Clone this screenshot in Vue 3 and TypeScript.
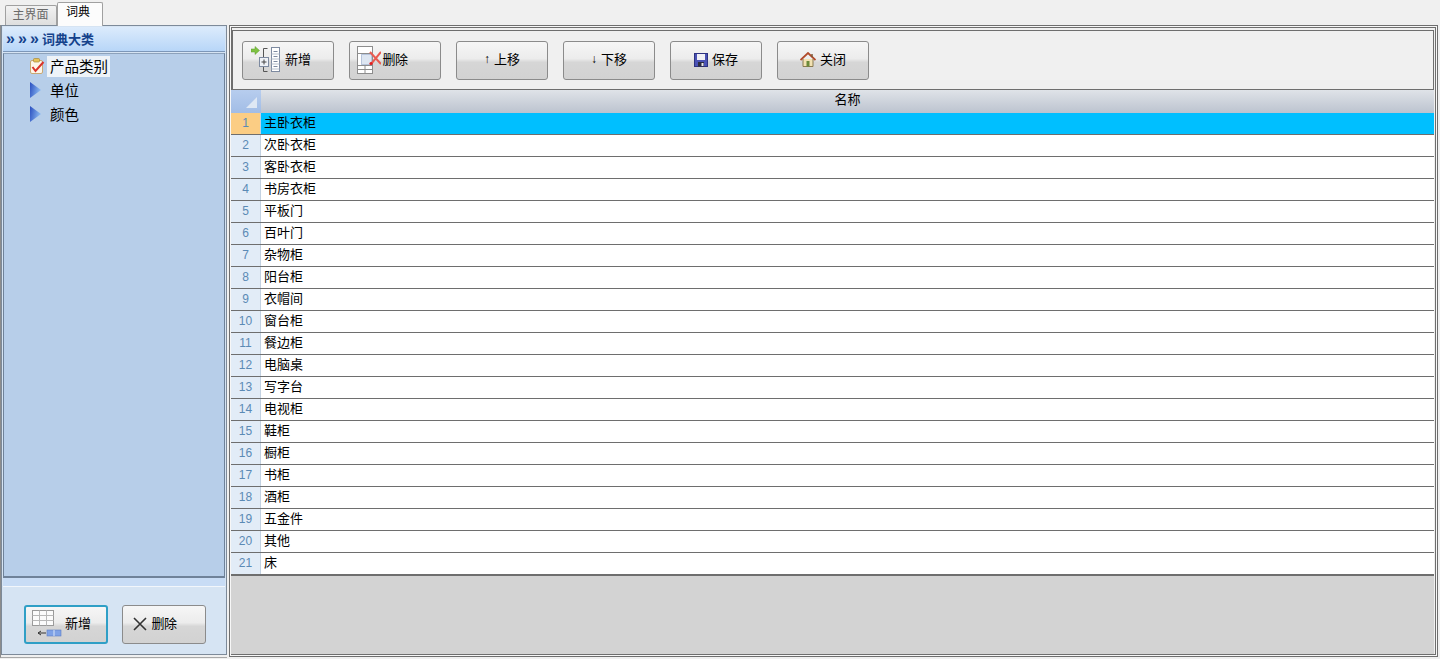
<script setup lang="ts">
const rows: string[] = ['主卧衣柜','次卧衣柜','客卧衣柜','书房衣柜','平板门','百叶门','杂物柜','阳台柜','衣帽间','窗台柜','餐边柜','电脑桌','写字台','电视柜','鞋柜','橱柜','书柜','酒柜','五金件','其他','床']
</script>

<template>
  <div class="app">
    <div class="tabs">
      <div class="tab">主界面</div>
      <div class="tab active">词典</div>
    </div>
    <div class="main">
      <div class="left-wrap">
        <aside class="left">
          <div class="left-title">
            <span class="chev">»</span><span class="chev">»</span><span class="chev">»</span><span>词典大类</span>
          </div>
          <div class="tree">
            <div class="node">
              <svg width="16" height="16" viewBox="0 0 16 16" class="nico">
                <rect x="1.5" y="2.5" width="12" height="13" rx="1.5" fill="#fdf6ea" stroke="#c9a873"/>
                <rect x="4.5" y="0.5" width="6" height="3.5" rx="1" fill="#e6c25a" stroke="#a98a3a" stroke-width=".7"/>
                <path d="M3.5 9 L6.5 13 L14.5 4" fill="none" stroke="#d9342b" stroke-width="2"/>
              </svg>
              <span class="lbl sel">产品类别</span>
            </div>
            <div class="node">
              <svg width="16" height="16" viewBox="0 0 16 16" class="nico">
                <defs><linearGradient id="tri" x1="0" y1="0" x2="1" y2="0.3"><stop offset="0" stop-color="#2a4fc0"/><stop offset="1" stop-color="#8ab8f0"/></linearGradient></defs>
                <path d="M1 0 L12 8 L1 16 Z" fill="url(#tri)"/>
              </svg>
              <span class="lbl">单位</span>
            </div>
            <div class="node">
              <svg width="16" height="16" viewBox="0 0 16 16" class="nico">
                <path d="M1 0 L12 8 L1 16 Z" fill="url(#tri)"/>
              </svg>
              <span class="lbl">颜色</span>
            </div>
          </div>
          <div class="left-foot">
            <button class="btn small focus add">
              <svg width="30" height="28" viewBox="0 0 30 28">
                <rect x=".5" y=".5" width="21" height="15" fill="#fbfbfb" stroke="#9a9a9a"/>
                <path d="M.5 5.5H21.5M.5 10.5H21.5M7.5 .5V15.5M14.5 .5V15.5" stroke="#b8b8b8" fill="none"/>
                <path d="M6 23H14M6 23l3-2M6 23l3 2" stroke="#333" fill="none"/>
                <rect x="15" y="20" width="14" height="6" fill="#7fa2e6" stroke="#5b7ec4" stroke-width=".6"/>
                <path d="M22 20V26" stroke="#dbe6fa"/>
              </svg>
              <span>新增</span>
            </button>
            <button class="btn small del">
              <svg width="14" height="14" viewBox="0 0 14 14"><path d="M1 1 L13 13M13 1 L1 13" stroke="#333" stroke-width="1.6" fill="none"/></svg>
              <span class="tight">删除</span>
            </button>
          </div>
        </aside>
      </div>
      <section class="right">
        <div class="right-inner">
          <div class="toolbar">
            <button class="btn wide b-add">
              <svg width="30" height="28" viewBox="0 0 30 28">
                <path d="M0 3H4V.5L8.5 4.5L4 8.5V6H0Z" fill="#7fc242" stroke="#5a9a2e" stroke-width=".5"/>
                <path d="M16.5 2.5H12.5V25.5H16.5" fill="none" stroke="#555"/>
                <rect x="20.5" y="1.5" width="8" height="24" fill="#fff" stroke="#7d8aa0"/>
                <path d="M22.5 5.5H26.5M22.5 10.5H26.5M22.5 15.5H26.5M22.5 20.5H26.5" stroke="#7d8aa0"/>
                <path d="M20.5 8H28.5M20.5 13H28.5M20.5 18H28.5M20.5 23H28.5" stroke="#b5bfcc"/>
                <rect x="8.5" y="11.5" width="9" height="9" fill="#eef1f6" stroke="#7d8aa0"/>
                <path d="M10.5 16H15.5M13 13.5V18.5" stroke="#444"/>
              </svg>
              <span>新增</span>
            </button>
            <button class="btn wide b-del">
              <svg width="24" height="28" viewBox="0 0 24 28">
                <rect x=".5" y=".5" width="15" height="27" fill="#fff" stroke="#8d8d8d"/>
                <path d="M.5 7.5H15.5M.5 19.5H15.5M8 19.5V27.5M.5 23.5H15.5" stroke="#8d8d8d"/>
                <rect x="4.5" y="8.5" width="10" height="10" fill="#dde6f2" stroke="#7e97c0" stroke-dasharray="1 1"/>
                <path d="M13 6 L24 18M24 6 L14 18" stroke="#ea5a50" stroke-width="2" fill="none"/>
                <circle cx="14" cy="17.5" r="1.6" fill="#e01f1f"/>
              </svg>
              <span class="tight">删除</span>
            </button>
            <button class="btn wide"><span class="arrow">↑</span><span>上移</span></button>
            <button class="btn wide"><span class="arrow">↓</span><span>下移</span></button>
            <button class="btn wide">
              <svg width="14" height="14" viewBox="0 0 14 14">
                <rect x=".5" y=".5" width="13" height="13" fill="#4a52b5" stroke="#2d3280"/>
                <rect x="3" y="1" width="8" height="6" fill="#f0f0f5"/>
                <rect x="4" y="9" width="6" height="4.5" fill="#2c2c40"/>
                <rect x="7.5" y="10" width="2" height="3" fill="#e8e8f0"/>
              </svg>
              <span>保存</span>
            </button>
            <button class="btn wide">
              <svg width="16" height="15" viewBox="0 0 16 15">
                <path d="M3 7V14.5H13V7" fill="#f2e2b2" stroke="#8a7a50"/>
                <path d="M.5 8 L8 1 L15.5 8" fill="none" stroke="#b14a2a" stroke-width="1.8"/>
                <path d="M12 2V5" stroke="#7a5a3a" stroke-width="1.5"/>
                <rect x="6.5" y="9" width="3" height="5.5" fill="#6a8a3a"/>
              </svg>
              <span>关闭</span>
            </button>
          </div>
          <div class="grid">
            <div class="row head">
              <div class="num corner"><i class="tri"></i></div>
              <div class="cell center">名称</div>
            </div>
            <div v-for="(r, i) in rows" :key="r" class="row" :class="{ on: i === 0 }">
              <div class="num">{{ i + 1 }}</div>
              <div class="cell">{{ r }}</div>
            </div>
          </div>
          <div class="empty"></div>
        </div>
      </section>
    </div>
  </div>
</template>

<style>
html, body { margin: 0; padding: 0; background: #f0f0f0; overflow: hidden; }
</style>

<style scoped>
.app { width: 1440px; height: 659px; background: #f0f0f0; display: flex; flex-direction: column; font-family: "Noto Sans CJK SC", "Liberation Sans", sans-serif; font-size: 13px; color: #000; box-sizing: border-box; }
.tabs { height: 25px; display: flex; align-items: flex-end; padding-left: 5px; flex: none; }
.tab { box-sizing: border-box; width: 52px; height: 20px; border: 1px solid #a0a0a0; border-bottom: none; background: linear-gradient(#f2f2f2, #dedede); color: #6a6a6a; text-align: center; line-height: 16px; font-size: 12px; border-radius: 2px 2px 0 0; padding-right: 1px; }
.tab.active { width: 46px; height: 24px; background: #fcfcfc; color: #000; line-height: 15px; margin-bottom: -1px; position: relative; z-index: 1; padding-right: 4px; }
.main { flex: 1; display: flex; align-items: flex-start; gap: 2px; min-height: 0; }
.left-wrap { box-sizing: border-box; width: 227px; height: 633px; flex: none; border-left: 1px solid #8c8c8c; border-bottom: 1px solid #a8a8a8; }
.left { box-sizing: border-box; width: 226px; height: 630px; background: #d6e4f3; border: 1px solid #7d8a99; display: flex; flex-direction: column; padding: 1px; }
.left-title { height: 25px; flex: none; box-sizing: border-box; background: linear-gradient(#dcebfc, #b8d6f8); border-bottom: 1px solid #7d97b8; display: flex; align-items: center; padding: 0 0 2px 3px; color: #15428b; font-weight: 700; font-size: 13px; white-space: nowrap; }
.chev { width: 12px; flex: none; font-family: "Liberation Sans", sans-serif; font-size: 16px; line-height: 15px; }
.tree { box-sizing: border-box; height: 525px; flex: none; margin-top: 1px; background: #b7cee9; border: 1px solid #6f8299; border-top-color: #8da2bb; border-bottom-width: 2px; padding-left: 25px; }
.node { height: 24px; display: flex; align-items: center; gap: 2px; font-size: 14.5px; }
.nico { flex: none; }
.lbl { padding: 0 2px 2px 3px; line-height: 19px; }
.sel { background: #eef3f8; }
.left-foot { flex: 1; box-sizing: border-box; background: #d6e4f3; border-top: 1px solid #f2f6fb; margin-top: 8px; box-shadow: 0 -8px 0 #c8dcf5; display: flex; align-items: flex-start; gap: 14px; padding: 18px 0 0 21px; }
.btn { box-sizing: border-box; display: flex; align-items: center; justify-content: center; gap: 4px; height: 39px; border: 1px solid #8b8b8b; border-radius: 3px; background: linear-gradient(#f6f6f6 0%, #ececec 45%, #d6d6d6 55%, #d2d2d2 100%); font-family: inherit; font-size: 13px; color: #000; padding: 0 0 2px; }
.btn span { padding-bottom: 2px; }
.btn.small { width: 84px; }
.btn.focus { border: 2px solid #2f9fc6; }
.add { justify-content: flex-start; padding-left: 6px; gap: 3px; }
.del { padding-right: 18px; }
.b-add { padding-right: 14px; }
.b-del { padding-right: 25px; gap: 1px; }
.tight { letter-spacing: -0.5px; }
.right { box-sizing: border-box; width: 1209px; height: 632px; flex: none; border: 1px solid #6e6e6e; padding: 1px; background: #f7f7f7; }
.right-inner { box-sizing: border-box; height: 100%; border: 1px solid #6e6e6e; padding-top: 2px; display: flex; flex-direction: column; background: #f0f0f0; }
.toolbar { box-sizing: border-box; height: 60px; flex: none; margin-right: 1px; border: 1px solid #6e6e6e; background: #f0f0f0; display: flex; align-items: flex-start; gap: 15px; padding: 10px 0 0 9px; }
.wide { width: 92px; }
.arrow { font-family: "Liberation Sans", sans-serif; font-size: 12px; }
.grid { flex: none; background: #fff; border-bottom: 1px solid #6e6e6e; margin: 0 1px 0 -1px; }
.row { display: flex; height: 22px; box-sizing: border-box; border-bottom: 1px solid #6e6e6e; }
.row.head { border-bottom: none; height: 23px; }
.row.on .cell { background: #00bfff; }
.row.on .num { background: #fbcd84; }
.num { width: 30px; flex: none; box-sizing: border-box; background: #e2ecf7; color: #5b8ab5; text-align: center; line-height: 20px; font-family: "Liberation Sans", sans-serif; font-size: 12px; border-right: 1px solid #c3d2e2; }
.corner { position: relative; background: linear-gradient(#b7cdee, #a2bde6); border-right: none; }
.tri { position: absolute; right: 4px; bottom: 5px; width: 0; height: 0; border-left: 11px solid transparent; border-bottom: 11px solid #dfe8f4; }
.cell { flex: 1; padding-left: 3px; line-height: 17px; font-size: 13px; white-space: nowrap; }
.head .cell { background: linear-gradient(#dfe3e8, #bcc3cf); line-height: 18px; font-size: 13px; }
.center { text-align: center; padding-left: 0; }
.empty { flex: 1; background: #d3d3d3; margin: 0 1px 0 -1px; }
</style>
